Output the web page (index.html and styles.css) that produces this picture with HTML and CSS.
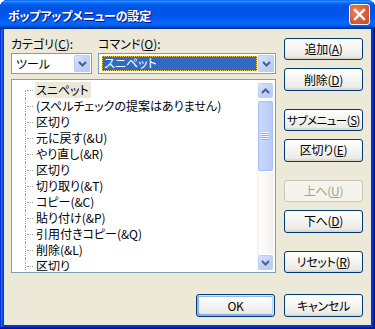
FILE: index.html
```html
<!DOCTYPE html>
<html>
<head>
    <meta http-equiv="Content-Type" content="text/html; charset=utf-8" />
    <title>ポップアップメニューの設定</title>
    <link rel="stylesheet" href="styles.css">
</head>

<body>
    <div class="window">
        <header class="titlebar">
            <span class="title">ポップアップメニューの設定</span>
            <button class="close-btn">
                <svg width="13" height="13" viewBox="0 0 13 13">
                    <path d="M2 2 L11 11 M11 2 L2 11" stroke="#fff" stroke-width="2.4" stroke-linecap="square" fill="none" />
                </svg>
            </button>
        </header>
        <section class="client">
            <div class="main">
                <div class="fields">
                    <div class="field field-category">
                        <label>カテゴリ(<u>C</u>):</label>
                        <div class="combo">
                            <span class="combo-text">ツール</span>
                            <span class="combo-btn">
                                <svg width="9" height="6" viewBox="0 0 9 6"><path d="M1 1 L4.5 4.5 L8 1" stroke="#4d6185" stroke-width="2" fill="none" /></svg>
                            </span>
                        </div>
                    </div>
                    <div class="field field-command">
                        <label>コマンド(<u>O</u>):</label>
                        <div class="combo focused">
                            <span class="combo-text"><span class="selected">スニペット</span></span>
                            <span class="combo-btn">
                                <svg width="9" height="6" viewBox="0 0 9 6"><path d="M1 1 L4.5 4.5 L8 1" stroke="#4d6185" stroke-width="2" fill="none" /></svg>
                            </span>
                        </div>
                    </div>
                </div>
                <div class="listbox">
                    <ul class="tree">
                        <li class="first"><span class="current">スニペット</span></li>
                        <li><span>(スペルチェックの提案はありません)</span></li>
                        <li><span>区切り</span></li>
                        <li><span>元に戻す(&amp;U)</span></li>
                        <li><span>やり直し(&amp;R)</span></li>
                        <li><span>区切り</span></li>
                        <li><span>切り取り(&amp;T)</span></li>
                        <li><span>コピー(&amp;C)</span></li>
                        <li><span>貼り付け(&amp;P)</span></li>
                        <li><span>引用付きコピー(&amp;Q)</span></li>
                        <li><span>削除(&amp;L)</span></li>
                        <li><span>区切り</span></li>
                    </ul>
                    <div class="scrollbar">
                        <span class="scroll-btn">
                            <svg width="9" height="6" viewBox="0 0 9 6"><path d="M1 5 L4.5 1.5 L8 5" stroke="#4d6185" stroke-width="2" fill="none" /></svg>
                        </span>
                        <div class="track">
                            <div class="thumb"><span class="grip"></span></div>
                        </div>
                        <span class="scroll-btn">
                            <svg width="9" height="6" viewBox="0 0 9 6"><path d="M1 1 L4.5 4.5 L8 1" stroke="#4d6185" stroke-width="2" fill="none" /></svg>
                        </span>
                    </div>
                </div>
            </div>
            <div class="side">
                <button class="btn">追加(<u>A</u>)</button>
                <button class="btn">削除(<u>D</u>)</button>
                <button class="btn sep narrow">サブメニュー(<u>S</u>)</button>
                <button class="btn">区切り(<u>E</u>)</button>
                <button class="btn sep" disabled>上へ(<u>U</u>)</button>
                <button class="btn">下へ(<u>D</u>)</button>
                <button class="btn sep">リセット(<u>R</u>)</button>
            </div>
            <button class="btn default ok-btn">OK</button>
            <button class="btn cancel-btn">キャンセル</button>
        </section>
    </div>
</body>

</html>
```

FILE: styles.css
```css
body {
    margin: 0;
    padding: 0;
    font-family: "Noto Sans CJK JP", "Liberation Sans", sans-serif;
    font-size: 12px;
    font-feature-settings: "palt";
}
.window {
    width: 375px;
    height: 329px;
    display: flex;
    flex-direction: column;
    border-radius: 8px 8px 0 0;
    overflow: hidden;
    background: #0831d9;
    box-shadow: inset -1px -1px #00138c, inset 1px 0 #0831d9, inset -2px -2px #001ea0, inset 2px 0 #166aee, inset -3px -3px #003bda, inset 3px 0 #0855dd;
}
.titlebar {
    height: 29px;
    flex: none;
    display: flex;
    align-items: center;
    justify-content: space-between;
    padding: 0 5px 0 8px;
    background: linear-gradient(180deg, #0058ee 0%, #3593ff 4%, #288eff 6%, #127dff 8%, #036ffc 10%, #0262ee 14%, #0057e5 20%, #0054e3 24%, #0055eb 56%, #005bf5 66%, #026afe 76%, #0062ef 86%, #0052d6 92%, #0040ab 94%, #003092 100%);
}
.title {
    color: #fff;
    font-weight: bold;
    font-size: 12px;
    letter-spacing: -0.2px;
    text-shadow: 1px 1px #0f1089;
    padding-top: 1px;
}
.close-btn {
    width: 21px;
    height: 21px;
    padding: 0;
    border: 1px solid #fff;
    border-radius: 3px;
    display: flex;
    align-items: center;
    justify-content: center;
    background: radial-gradient(circle at 35% 35%, #f08a66 0%, #e0603a 45%, #cc4420 100%);
}
.client {
    flex: 1;
    margin: 0 4px 4px 4px;
    background: #ece9d8;
    padding: 8px 8px 8px 7px;
    display: grid;
    grid-template-columns: 265px 79px;
    grid-template-rows: 236px 23px;
    column-gap: 8px;
    row-gap: 21px;
}
.main {
    display: flex;
    flex-direction: column;
}
.fields {
    display: flex;
    gap: 6px;
}
.field label {
    display: block;
    height: 14px;
    line-height: 14px;
    margin-bottom: 2px;
    color: #000;
}
.field-category {
    width: 81px;
}
.field-command {
    width: 178px;
}
.combo {
    height: 21px;
    box-sizing: border-box;
    border: 1px solid #7f9db9;
    background: #fff;
    display: flex;
    padding: 1px;
}
.combo-text {
    flex: 1;
    line-height: 17px;
    padding-left: 3px;
}
.combo.focused .combo-text {
    padding: 1px 1px 1px 2px;
}
.selected {
    display: block;
    height: 15px;
    line-height: 14px;
    background: #316ac5;
    color: #fff;
    padding-left: 2px;
    box-sizing: border-box;
    outline: 1px dotted #f0c040;
    outline-offset: -1px;
}
.combo-btn {
    width: 16px;
    flex: none;
    display: flex;
    align-items: center;
    justify-content: center;
    border-radius: 2px;
    background: linear-gradient(135deg, #dde8fe 0%, #c1d3fb 50%, #b3c8f7 100%);
    box-shadow: inset 0 0 0 1px #bacff8;
}
.listbox {
    margin-top: 5px;
    height: 194px;
    box-sizing: border-box;
    border: 1px solid #7f9db9;
    background: #fff;
    padding: 2px 1px 1px 2px;
    display: flex;
    overflow: hidden;
}
.tree {
    flex: 1;
    margin: 0;
    padding: 0;
    list-style: none;
    overflow: hidden;
}
.tree li {
    position: relative;
    height: 16px;
    line-height: 16px;
    padding-left: 21px;
    white-space: nowrap;
}
.tree li::before {
    content: "";
    position: absolute;
    left: 11px;
    top: 0;
    bottom: 0;
    border-left: 1px dotted #a0a0a0;
}
.tree li.first::before {
    top: 8px;
}
.tree li::after {
    content: "";
    position: absolute;
    left: 13px;
    top: 8px;
    width: 6px;
    border-top: 1px dotted #a0a0a0;
}
.tree span {
    display: inline-block;
    height: 16px;
    padding: 0 2px 0 1px;
}
.tree span.current {
    background: #ece9d8;
}
.scrollbar {
    width: 17px;
    flex: none;
    display: flex;
    flex-direction: column;
    background: linear-gradient(90deg, #f3f1ec 0%, #fefefe 20%, #f3f1ec 100%);
}
.scroll-btn {
    height: 17px;
    box-sizing: border-box;
    display: flex;
    align-items: center;
    justify-content: center;
    border: 1px solid #fff;
    border-radius: 3px;
    background: linear-gradient(135deg, #dde8fe 0%, #c1d3fb 50%, #b3c8f7 100%);
    box-shadow: inset 0 0 0 1px #bacff8;
}
.track {
    flex: 1;
    padding-top: 1px;
}
.thumb {
    height: 72px;
    box-sizing: border-box;
    border: 1px solid #fff;
    border-radius: 3px;
    background: linear-gradient(90deg, #c9d8fc 0%, #c1d3fb 50%, #b4c8f6 100%);
    box-shadow: inset 0 0 0 1px #a9bff2;
    display: flex;
    align-items: center;
    justify-content: center;
}
.grip {
    width: 7px;
    height: 8px;
    background: repeating-linear-gradient(180deg, #eef4fe 0, #eef4fe 1px, #8cb0f8 1px, #8cb0f8 2px);
}
.side {
    margin-top: 1px;
    display: flex;
    flex-direction: column;
    gap: 8px;
}
.btn {
    width: 79px;
    height: 23px;
    padding: 0;
    box-sizing: border-box;
    border: 1px solid #003c74;
    border-radius: 3px;
    background: linear-gradient(180deg, #fff 0%, #ecebe6 86%, #d6d0c5 100%);
    font-family: "Noto Sans CJK JP", "Liberation Sans", sans-serif;
    font-size: 12px;
    font-feature-settings: "palt";
    color: #000;
    line-height: 20px;
    white-space: nowrap;
    letter-spacing: -0.3px;
}
.btn.narrow {
    font-size: 11.5px;
    letter-spacing: -0.5px;
}
.btn.sep {
    margin-top: 10px;
}
.btn:disabled {
    border-color: #c9c7ba;
    background: #f5f4ea;
    color: #a1a192;
}
.btn.default {
    box-shadow: inset -1px 1px #cee7ff, inset 1px 2px #98b8ea, inset -2px 2px #bcd4f6, inset 1px -1px #89ade4, inset 2px -2px #89ade4;
}
.ok-btn {
    justify-self: end;
    margin-right: 1px;
}
```
